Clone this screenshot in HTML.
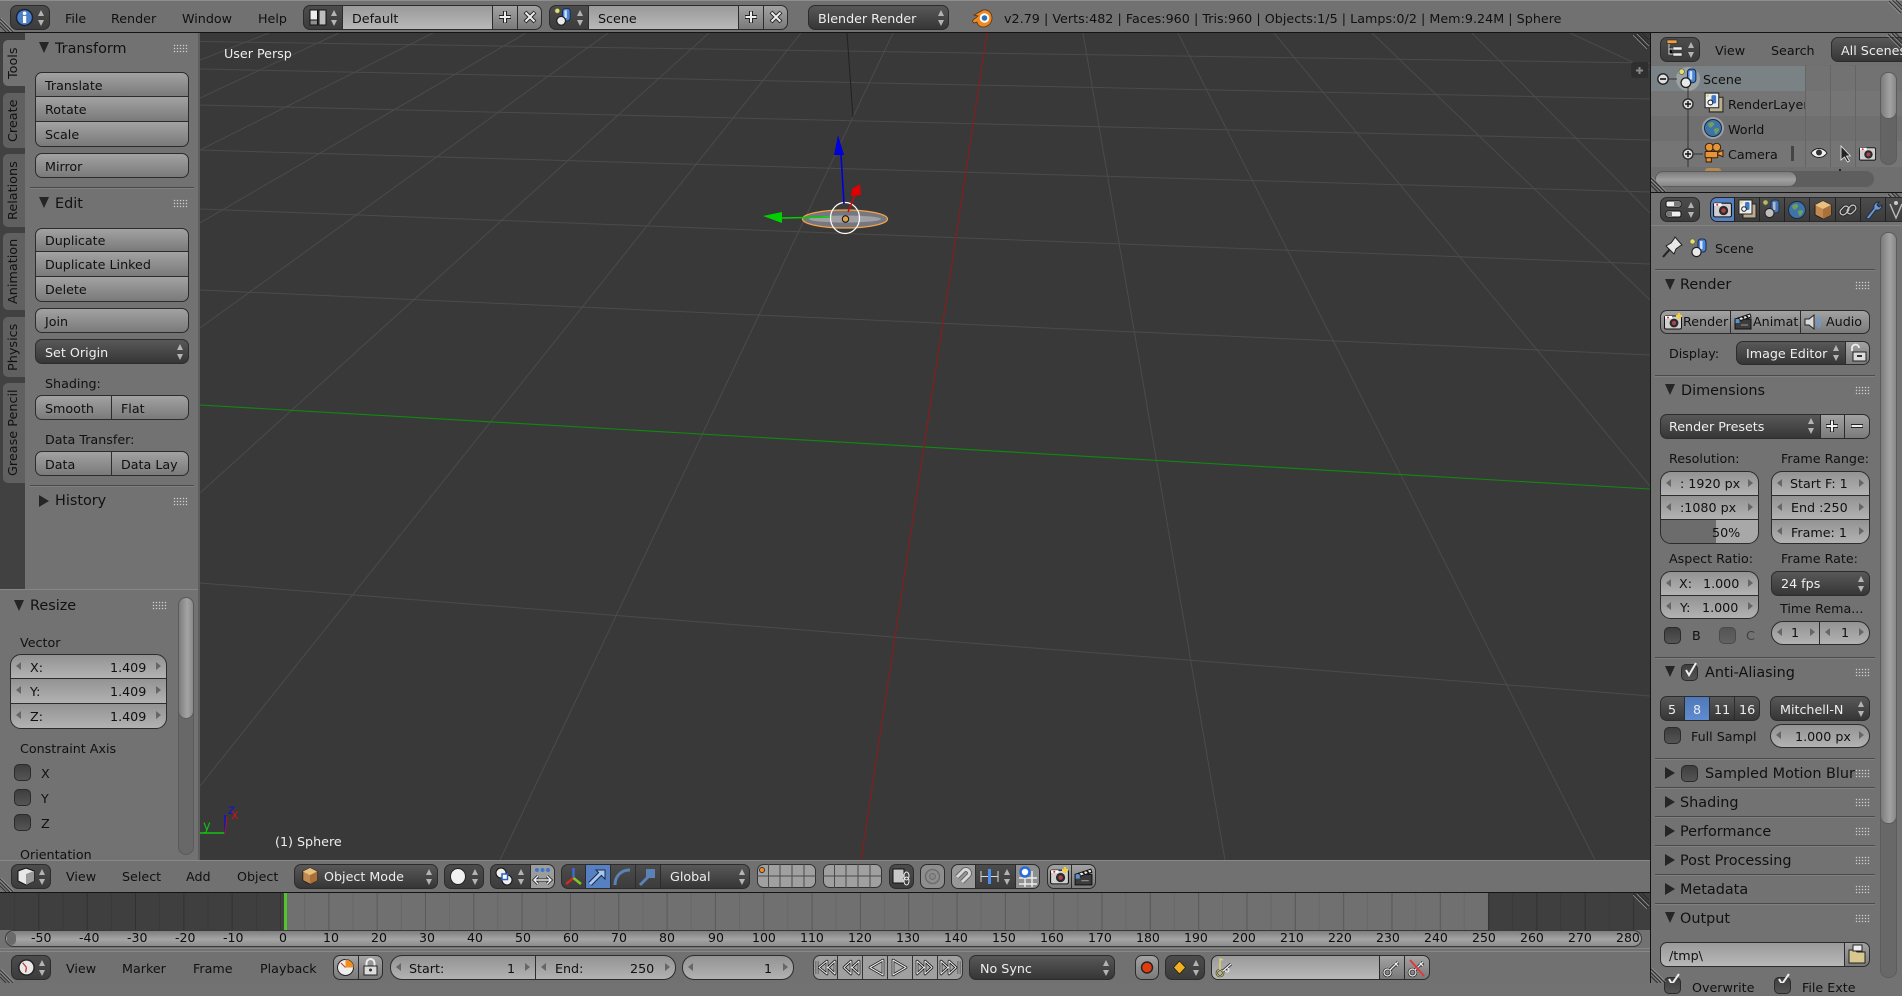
<!DOCTYPE html>
<html lang="en"><head><meta charset="utf-8"><title>Blender 2.79</title>
<style>
html,body{margin:0;padding:0;background:#727272}
body{width:1902px;height:983px;position:relative;overflow:hidden;font-family:"DejaVu Sans","Liberation Sans",sans-serif;font-size:12.7px;color:#111}
div,i,span,svg{position:absolute}
i{display:block}
.t{white-space:nowrap;line-height:16px;color:#101010}
.w{color:#eee}
.h{font-size:14.4px;color:#111;margin-top:1px}
.b,.n,.m,.f,.d{box-sizing:border-box;border:1px solid #2c2c2c}
.b{background:linear-gradient(#a2a2a2,#7a7a7a)}
.n{background:linear-gradient(#939393,#b2b2b2)}
.f{background:linear-gradient(#9a9a9a,#b8b8b8)}
.m{background:linear-gradient(#585858,#363636)}
.d{background:linear-gradient(#4c4c4c,#3c3c3c)}
.r{border-radius:7px}.rT{border-radius:7px 7px 0 0}.rB{border-radius:0 0 7px 7px}.rL{border-radius:7px 0 0 7px}.rR{border-radius:0 7px 7px 0}
.n.rT{border-radius:11px 11px 0 0}.n.rB{border-radius:0 0 11px 11px}
.pill{border-radius:12px}.pL{border-radius:12px 0 0 12px}.pR{border-radius:0 12px 12px 0}
.sep{height:1px;background:#4a4a4a;box-shadow:0 1px 0 #808080}
.ad{width:0;height:0;border-left:5px solid transparent;border-right:5px solid transparent;border-top:11px solid #252525}
.ac{width:0;height:0;border-top:6px solid transparent;border-bottom:6px solid transparent;border-left:10px solid #252525}
.dots{width:15px;height:9px;background:radial-gradient(circle,#cfcfcf .65px,transparent .85px) 0 0/3px 3px}
.al,.arr{top:50%;margin-top:-5px;width:0;height:0;border-top:4px solid transparent;border-bottom:4px solid transparent}
.al{left:5px;border-right:5px solid #666}
.arr{right:5px;border-left:5px solid #666}
.ud{width:8px;height:18px}
.ud:before,.ud:after{content:"";position:absolute;left:0;width:0;height:0;border-left:3.5px solid transparent;border-right:3.5px solid transparent}
.ud:before{top:1px;border-bottom:6px solid #b4b4b4}
.ud:after{bottom:1px;border-top:6px solid #b4b4b4}
.cb{width:17px;height:17px;box-sizing:border-box;border:1px solid #2a2a2a;border-radius:5px;background:linear-gradient(#3e3e3e,#555)}
.tab{left:3px;width:22px;background:#606060;border-radius:5px 0 0 5px;box-sizing:border-box}
.vt{left:6px;width:16px;writing-mode:vertical-rl;transform:rotate(180deg);text-align:center;line-height:16px;color:#111;white-space:nowrap;font-size:12.8px}
.sb{border-radius:8px}
.cell{background:#a0a0a0;border:1px solid #333;box-sizing:border-box}
.lab{font-size:12.5px;line-height:16px;color:#0c0c0c;white-space:nowrap}
</style></head><body>

<svg width="0" height="0" style="left:0;top:0"><defs>
<symbol id="scene" viewBox="0 0 20 20"><circle cx="3.500" cy="3.500" r="2.600" fill="#e4df6a" stroke="#555" stroke-width=".6"/><rect x="9" y="1" width="8" height="13" rx="3" fill="#4d86d6" stroke="#152a50"/><rect x="11" y="3" width="2.500" height="8" fill="#cfe2ff"/><circle cx="7.500" cy="14" r="4.600" fill="#e9e9e9" stroke="#1d1d1d" stroke-width="1.200"/></symbol>
<symbol id="plus" viewBox="0 0 16 16"><path d="M8 2v12M2 8h12" stroke="#222" stroke-width="4"/><path d="M8 2.500v11M2.500 8h11" stroke="#eee" stroke-width="2"/></symbol>
<symbol id="x" viewBox="0 0 16 16"><path d="M3 3l10 10M13 3L3 13" stroke="#222" stroke-width="4"/><path d="M3.500 3.500l9 9M12.500 3.500l-9 9" stroke="#eee" stroke-width="2"/></symbol>
<symbol id="hatch" viewBox="0 0 16 16"><path d="M1 1l14 14M5 0l11 11M9 0l7 7" stroke="#2a2a2a" stroke-width="1"/><path d="M0 2l14 14M4 1l12 12" stroke="#999" stroke-width=".7"/></symbol>
<symbol id="hatch2" viewBox="0 0 16 16"><path d="M0 1l15 15M0 5l11 11M0 9l7 7" stroke="#2a2a2a" stroke-width="1"/><path d="M1 0l15 15M0 3l13 13" stroke="#999" stroke-width=".7"/></symbol>
<symbol id="cam" viewBox="0 0 20 20"><rect x="1.500" y="4" width="17" height="13" rx="1.500" fill="#cfcfcf" stroke="#111"/><rect x="2" y="4" width="7" height="2.500" fill="#fff"/><circle cx="11" cy="11" r="4.400" fill="#2a2a2a"/><circle cx="11" cy="11" r="2.200" fill="#a8434f"/><circle cx="5" cy="5.500" r="1" fill="#e23"/></symbol>
<symbol id="layers" viewBox="0 0 20 20"><path d="M6 5h13v14H6z" fill="#b8ae8e" stroke="#222"/><path d="M2 1h13v14H2z" fill="#ededed" stroke="#222"/><rect x="8" y="3" width="4.500" height="8" rx="1.500" fill="#3f78c8"/><circle cx="7" cy="10" r="2.300" fill="#fff" stroke="#222"/><circle cx="4.500" cy="3.500" r="1.200" fill="#e6d655"/></symbol>
<symbol id="world" viewBox="0 0 20 20"><circle cx="10" cy="10" r="8.500" fill="#3e74a8" stroke="#1c2a40"/><path d="M5 6c3-3 5-2 6-1s-1 3-2 4-3 1-4-3zM11 11c2-1 5-1 5 0s-2 5-3 5-2-3-2-5z" fill="#6fa05a"/></symbol>
<symbol id="filmcam" viewBox="0 0 20 20"><circle cx="6" cy="5" r="3.800" fill="#e59538" stroke="#3a2310"/><circle cx="13" cy="5" r="3.800" fill="#e59538" stroke="#3a2310"/><rect x="2" y="9" width="12" height="6" rx="1" fill="#e59538" stroke="#3a2310"/><path d="M3 15h5v4H3zM14 10l5-2v6l-5-2z" fill="#e59538" stroke="#3a2310"/></symbol>
<symbol id="cube" viewBox="0 0 20 20"><path d="M10 1l8 4v10l-8 4-8-4V5z" fill="#c08a50" stroke="#2a1c10"/><path d="M2 5l8 4 8-4-8-4z" fill="#e9c07f"/><path d="M10 9v10l8-4V5z" fill="#a8713a"/></symbol>
<symbol id="wrench" viewBox="0 0 20 20"><path d="M3 18L11 8c-1-4 2-6 5-6l-2 3 2 2 3-2c0 3-2 6-6 5l-7 9z" fill="#6e9ad2" stroke="#1e2e48"/></symbol>
<symbol id="link" viewBox="0 0 20 20"><g fill="none"><rect x="1.500" y="7.500" width="10" height="6" rx="3" transform="rotate(-45 6.500 10.500)" stroke="#222" stroke-width="3"/><rect x="8.500" y="6.500" width="10" height="6" rx="3" transform="rotate(-45 13.500 9.500)" stroke="#222" stroke-width="3"/><rect x="1.500" y="7.500" width="10" height="6" rx="3" transform="rotate(-45 6.500 10.500)" stroke="#c8c8c8" stroke-width="1.300"/><rect x="8.500" y="6.500" width="10" height="6" rx="3" transform="rotate(-45 13.500 9.500)" stroke="#c8c8c8" stroke-width="1.300"/></g></symbol>
<symbol id="key" viewBox="0 0 20 20"><circle cx="5.500" cy="14.500" r="3.500" fill="none" stroke="#222" stroke-width="2.600"/><circle cx="5.500" cy="14.500" r="3.500" fill="none" stroke="#eee" stroke-width="1.200"/><path d="M8 12l8-8M13 5l3 3" stroke="#222" stroke-width="3"/><path d="M8 12l8-8M13 5l3 3" stroke="#eee" stroke-width="1.400"/></symbol>
<symbol id="clap" viewBox="0 0 20 20"><rect x="2" y="8" width="16" height="10" fill="#3c3c3c" stroke="#111"/><path d="M2 8l15-5 1 3L3 11z" fill="#eee" stroke="#111"/><path d="M5 7l2 2M9 5.500l2 2M13 4.500l2 2" stroke="#111" stroke-width="1.600"/><rect x="2.500" y="8" width="4" height="4" fill="#5c8fd0"/><path d="M8 14h7" stroke="#999"/></symbol>
<symbol id="clock" viewBox="0 0 20 20"><circle cx="10" cy="10" r="8" fill="#e8e8e8" stroke="#222" stroke-width="1.500"/><path d="M10 10L6 5M10 10l-1 5" stroke="#c33" stroke-width="1.400"/></symbol>
</defs></svg>

<!-- TOP BAR -->
<div style="left:0;top:0;width:1902px;height:32px;background:#717171;border-top:1px solid #8e8e8e;box-sizing:border-box"></div>
<div style="left:0;top:32px;width:1902px;height:1px;background:#141414"></div>
<svg style="left:0;top:18px" width="14" height="14"><use href="#hatch2"/></svg>
<svg style="left:1888px;top:0" width="14" height="14"><use href="#hatch"/></svg>

<div class="d r" style="left:10px;top:5px;width:40px;height:25px"></div>
<svg style="left:15px;top:8px" width="19" height="19"><circle cx="9.500" cy="9.500" r="8" fill="#4c80c8" stroke="#16233a" stroke-width="1.500"/><rect x="8" y="8" width="3.200" height="7" fill="#fff"/><circle cx="9.600" cy="5.300" r="1.800" fill="#fff"/></svg>
<i class="ud" style="left:38px;top:9px"></i>
<div class="t" style="left:65px;top:11px">File</div>
<div class="t" style="left:111px;top:11px">Render</div>
<div class="t" style="left:182px;top:11px">Window</div>
<div class="t" style="left:258px;top:11px">Help</div>

<div class="d rL" style="left:303px;top:5px;width:40px;height:25px"></div>
<svg style="left:309px;top:9px" width="18" height="17"><rect x="1" y="1" width="7.500" height="15" fill="#ededed" stroke="#111"/><rect x="10" y="1" width="7" height="15" fill="#bdbdbd" stroke="#111"/><rect x="1" y="11" width="7.500" height="5" fill="#8e8e8e" stroke="#111"/></svg>
<i class="ud" style="left:331px;top:9px"></i>
<div class="f" style="left:342px;top:5px;width:151px;height:25px"></div>
<div class="t" style="left:352px;top:11px">Default</div>
<div class="b" style="left:492px;top:5px;width:26px;height:25px"></div>
<svg style="left:497px;top:9px" width="16" height="16"><use href="#plus"/></svg>
<div class="b rR" style="left:517px;top:5px;width:25px;height:25px"></div>
<svg style="left:522px;top:9px" width="16" height="16"><use href="#x"/></svg>

<div class="d rL" style="left:549px;top:5px;width:40px;height:25px"></div>
<svg style="left:554px;top:7px" width="19" height="20"><use href="#scene"/></svg>
<i class="ud" style="left:577px;top:9px"></i>
<div class="f" style="left:588px;top:5px;width:151px;height:25px"></div>
<div class="t" style="left:598px;top:11px">Scene</div>
<div class="b" style="left:738px;top:5px;width:26px;height:25px"></div>
<svg style="left:743px;top:9px" width="16" height="16"><use href="#plus"/></svg>
<div class="b rR" style="left:763px;top:5px;width:25px;height:25px"></div>
<svg style="left:768px;top:9px" width="16" height="16"><use href="#x"/></svg>

<div class="m r" style="left:808px;top:5px;width:141px;height:25px"></div>
<div class="t w" style="left:818px;top:11px">Blender Render</div>
<i class="ud" style="left:938px;top:9px"></i>
<svg style="left:972px;top:8px" width="21" height="20" viewBox="0 0 21 20"><path d="M0 13l6-5-4-1 9-5c5-1 9 3 9 8s-4 9-9 9c-4 0-6-3-6-5l-3 1z" fill="#ee8a24" stroke="#5a2f08" stroke-width=".8"/><circle cx="12.500" cy="10" r="4.800" fill="#fff"/><circle cx="12.500" cy="10" r="2.800" fill="#2a6fb8"/></svg>
<div class="t" style="left:1004px;top:11px;letter-spacing:.03px">v2.79 | Verts:482 | Faces:960 | Tris:960 | Objects:1/5 | Lamps:0/2 | Mem:9.24M | Sphere</div>

<!-- VIEWPORT -->
<div style="left:200px;top:33px;width:1450px;height:827px;background:#393939"></div>
<svg style="left:200px;top:33px" width="1450" height="827" viewBox="200 33 1450 827">
<g stroke="#4b4b4b" stroke-width="1" fill="none">
<path d="M200 41.500L1650 63M200 69L1650 99M200 105L1650 140M200 150L1650 192M200 209L1650 264M200 290L1650 355M200 583L1650 696"/>
<path d="M893 33L500 860M801 33L200 786M709 33L200 493M608 33L200 328M526 33L200 223M433 33L200 150M339 33L200 98M269 33L200 60M1083 33L1225 860M1178 33L1595 860M1274 33L1650 486M1372 33L1650 300M1472 33L1650 213M1570 33L1650 70"/>
</g>
<path d="M200 405L1650 489" stroke="#0f8a0f" stroke-width="1.100"/>
<path d="M987 33L861 860" stroke="#8a1c1c" stroke-width="1.100"/>
<path d="M847 33L853 117" stroke="#222" stroke-width="1"/>
<ellipse cx="845" cy="219" rx="42.500" ry="9" fill="#77777f" stroke="#f2a447" stroke-width="1.300"/>
<ellipse cx="845" cy="219" rx="36" ry="3.500" fill="#a0a0a4"/>
<ellipse cx="845" cy="218" rx="14.500" ry="15.500" fill="none" stroke="#fff" stroke-width="1.200"/>
<path d="M841 155L844 204" stroke="#0000dc" stroke-width="1.600"/>
<path d="M838 135L844 155H834z" fill="#0000dc"/>
<path d="M855 195L848 212" stroke="#e00000" stroke-width="1.400"/>
<path d="M860 184L861 195L851 196L852 189z" fill="#e00000"/>
<path d="M782 218L830 217" stroke="#00d000" stroke-width="1.400"/>
<path d="M763 216L782 212V223z" fill="#00d000"/>
<circle cx="845.500" cy="219" r="3.200" fill="#e0a050" stroke="#111" stroke-width="1"/>
<path d="M200 833H225" stroke="#0fc40f" stroke-width="1.600"/>
<path d="M225 815V834" stroke="#1010d0" stroke-width="1.400"/>
<path d="M225 834L227 817" stroke="#b01818" stroke-width="1"/>
<text x="203" y="830" fill="#0fc40f" font-size="13" font-family="DejaVu Sans">y</text>
<text x="228" y="814" fill="#1515c8" font-size="13" font-family="DejaVu Sans">z</text>
<text x="231" y="819" fill="#c01818" font-size="13" font-family="DejaVu Sans">x</text>
</svg>
<div class="t" style="left:224px;top:46px;color:#eee">User Persp</div>
<div class="t" style="left:275px;top:834px;color:#eee">(1) Sphere</div>
<svg style="left:1633px;top:33px" width="16" height="16"><use href="#hatch"/></svg>
<div style="left:1631px;top:62px;width:17px;height:16px;background:#2f2f2f;border-radius:3px 0 0 3px"></div>
<svg style="left:1635px;top:66px" width="9" height="9"><path d="M4.500 1v7M1 4.500h7" stroke="#8a8a8a" stroke-width="2"/></svg>

<!-- LEFT TOOLS -->
<div style="left:0;top:33px;width:25px;height:557px;background:#414141"></div>
<div style="left:25px;top:33px;width:175px;height:557px;background:#727272"></div>
<div style="left:198px;top:33px;width:2px;height:827px;background:#5f5f5f"></div>
<div class="tab" style="top:40px;height:46px;background:#727272"></div><div class="vt" style="top:40px;height:46px">Tools</div>
<div class="tab" style="top:93px;height:55px"></div><div class="vt" style="top:93px;height:55px">Create</div>
<div class="tab" style="top:154px;height:73px"></div><div class="vt" style="top:154px;height:73px">Relations</div>
<div class="tab" style="top:233px;height:77px"></div><div class="vt" style="top:233px;height:77px">Animation</div>
<div class="tab" style="top:317px;height:60px"></div><div class="vt" style="top:317px;height:60px">Physics</div>
<div class="tab" style="top:383px;height:100px"></div><div class="vt" style="top:383px;height:100px">Grease Pencil</div>

<i class="ad" style="left:39px;top:42px"></i>
<div class="t h" style="left:55px;top:40px">Transform</div>
<i class="dots" style="left:173px;top:44px"></i>
<div class="b rT" style="left:35px;top:72px;width:154px;height:25px"></div>
<div class="b" style="left:35px;top:96px;width:154px;height:26px"></div>
<div class="b rB" style="left:35px;top:121px;width:154px;height:26px"></div>
<div class="t" style="left:45px;top:78px">Translate</div>
<div class="t" style="left:45px;top:102px">Rotate</div>
<div class="t" style="left:45px;top:127px">Scale</div>
<div class="b r" style="left:35px;top:153px;width:154px;height:25px"></div>
<div class="t" style="left:45px;top:159px">Mirror</div>
<div class="sep" style="left:30px;top:187px;width:164px"></div>
<i class="ad" style="left:39px;top:197px"></i>
<div class="t h" style="left:55px;top:195px">Edit</div>
<i class="dots" style="left:173px;top:199px"></i>
<div class="b rT" style="left:35px;top:228px;width:154px;height:24px"></div>
<div class="b" style="left:35px;top:251px;width:154px;height:26px"></div>
<div class="b rB" style="left:35px;top:276px;width:154px;height:26px"></div>
<div class="t" style="left:45px;top:233px">Duplicate</div>
<div class="t" style="left:45px;top:257px">Duplicate Linked</div>
<div class="t" style="left:45px;top:282px">Delete</div>
<div class="b r" style="left:35px;top:308px;width:154px;height:25px"></div>
<div class="t" style="left:45px;top:314px">Join</div>
<div class="m r" style="left:35px;top:339px;width:154px;height:25px"></div>
<div class="t w" style="left:45px;top:345px">Set Origin</div>
<i class="ud" style="left:177px;top:343px"></i>
<div class="t" style="left:45px;top:376px">Shading:</div>
<div class="b rL" style="left:35px;top:395px;width:77px;height:25px"></div>
<div class="b rR" style="left:111px;top:395px;width:78px;height:25px"></div>
<div class="t" style="left:45px;top:401px">Smooth</div>
<div class="t" style="left:121px;top:401px">Flat</div>
<div class="t" style="left:45px;top:432px">Data Transfer:</div>
<div class="b rL" style="left:35px;top:451px;width:77px;height:25px"></div>
<div class="b rR" style="left:111px;top:451px;width:78px;height:25px"></div>
<div class="t" style="left:45px;top:457px">Data</div>
<div class="t" style="left:121px;top:457px">Data Lay</div>
<div class="sep" style="left:30px;top:485px;width:164px"></div>
<i class="ac" style="left:39px;top:495px"></i>
<div class="t h" style="left:55px;top:492px">History</div>
<i class="dots" style="left:173px;top:497px"></i>

<!-- RESIZE OP PANEL -->
<div style="left:0;top:589px;width:198px;height:271px;background:#727272;border-top:1px solid #868686;box-sizing:border-box"></div>
<i class="ad" style="left:14px;top:600px"></i>
<div class="t h" style="left:30px;top:597px">Resize</div>
<i class="dots" style="left:152px;top:601px"></i>
<div class="sb" style="left:178px;top:597px;width:16px;height:258px;background:#686868;border:1px solid #5a5a5a;box-sizing:border-box"></div>
<div class="sb" style="left:178px;top:597px;width:16px;height:122px;background:linear-gradient(90deg,#7c7c7c,#a4a4a4 60%,#8a8a8a);border:1px solid #5a5a5a;box-sizing:border-box"></div>
<div class="t" style="left:20px;top:635px">Vector</div>
<div class="n rT" style="left:10px;top:654px;width:157px;height:25px"><i class="al"></i><i class="arr"></i></div>
<div class="n" style="left:10px;top:678px;width:157px;height:26px"><i class="al"></i><i class="arr"></i></div>
<div class="n rB" style="left:10px;top:703px;width:157px;height:26px"><i class="al"></i><i class="arr"></i></div>
<div class="t" style="left:30px;top:660px">X:</div><div class="t" style="left:110px;top:660px">1.409</div>
<div class="t" style="left:30px;top:684px">Y:</div><div class="t" style="left:110px;top:684px">1.409</div>
<div class="t" style="left:30px;top:709px">Z:</div><div class="t" style="left:110px;top:709px">1.409</div>
<div class="t" style="left:20px;top:741px">Constraint Axis</div>
<i class="cb" style="left:14px;top:764px"></i><div class="t" style="left:41px;top:766px">X</div>
<i class="cb" style="left:14px;top:789px"></i><div class="t" style="left:41px;top:791px">Y</div>
<i class="cb" style="left:14px;top:814px"></i><div class="t" style="left:41px;top:816px">Z</div>
<div class="t" style="left:20px;top:847px">Orientation</div>

<!-- 3D VIEW HEADER -->
<div style="left:0;top:860px;width:1650px;height:32px;background:#717171;border-top:1px solid #888;box-sizing:border-box"></div>
<div style="left:0;top:892px;width:1650px;height:1px;background:#141414"></div>
<svg style="left:0;top:878px" width="14" height="14"><use href="#hatch2"/></svg>
<div class="d r" style="left:11px;top:864px;width:40px;height:25px"></div>
<svg style="left:17px;top:867px" width="18" height="19"><path d="M9 1l8 3v10l-8 4-8-4V4z" fill="#e8e8e8" stroke="#111"/><path d="M9 7v11l8-4V4z" fill="#9a9a9a"/></svg>
<i class="ud" style="left:39px;top:868px"></i>
<div class="t" style="left:66px;top:869px">View</div>
<div class="t" style="left:122px;top:869px">Select</div>
<div class="t" style="left:186px;top:869px">Add</div>
<div class="t" style="left:237px;top:869px">Object</div>
<div class="m r" style="left:294px;top:864px;width:144px;height:25px"></div>
<svg style="left:301px;top:867px" width="18" height="18"><use href="#cube"/></svg>
<div class="t w" style="left:324px;top:869px">Object Mode</div>
<i class="ud" style="left:426px;top:868px"></i>
<div class="d r" style="left:444px;top:864px;width:40px;height:25px"></div>
<svg style="left:450px;top:868px" width="16" height="17"><ellipse cx="8" cy="8.500" rx="7.500" ry="8" fill="#f0f0f0" stroke="#222"/></svg>
<i class="ud" style="left:472px;top:868px"></i>
<div class="d rL" style="left:490px;top:864px;width:41px;height:25px"></div>
<svg style="left:495px;top:867px" width="19" height="19"><circle cx="6" cy="6" r="5" fill="#eee" stroke="#111"/><circle cx="12" cy="13" r="5" fill="#eee" stroke="#111"/><rect x="7" y="7" width="5.500" height="5.500" fill="#fff" stroke="#2a60c0" stroke-width="1.500"/></svg>
<i class="ud" style="left:518px;top:868px"></i>
<div class="b rR" style="left:530px;top:864px;width:25px;height:25px;background:#9c9c9c"></div>
<svg style="left:532px;top:866px" width="21" height="21"><g fill="#3f78c8"><circle cx="5" cy="4" r="2"/><circle cx="10.500" cy="4" r="2"/><circle cx="16" cy="4" r="2"/></g><path d="M2 14h17M6 10l-4 4 4 4M15 10l4 4-4 4" fill="none" stroke="#222" stroke-width="3"/><path d="M2 14h17M6 10l-4 4 4 4M15 10l4 4-4 4" fill="none" stroke="#eee" stroke-width="1.400"/></svg>
<div class="d rL" style="left:561px;top:864px;width:25px;height:25px"></div>
<svg style="left:563px;top:866px" width="21" height="21"><path d="M10.500 12V2" stroke="#3a6cd0" stroke-width="2.500"/><path d="M10.500 12L3 18" stroke="#d02a20" stroke-width="2.500"/><path d="M10.500 12L18 18" stroke="#80c820" stroke-width="2.500"/></svg>
<div style="left:585px;top:864px;width:26px;height:25px;background:#5680c2;border:1px solid #2a2a2a;box-sizing:border-box"></div>
<svg style="left:587px;top:866px" width="21" height="21"><path d="M3 18L14 7" fill="none" stroke="#1a2a48" stroke-width="5"/><path d="M9 4h9v9z" fill="#a8c8f0" stroke="#1a2a48"/><path d="M3 18L14 7" fill="none" stroke="#a8c8f0" stroke-width="3"/></svg>
<div class="d" style="left:610px;top:864px;width:26px;height:25px"></div>
<svg style="left:612px;top:866px" width="21" height="21"><path d="M3 19C3 10 9 4 18 4" fill="none" stroke="#5b82b4" stroke-width="3"/></svg>
<div class="d" style="left:635px;top:864px;width:26px;height:25px"></div>
<svg style="left:637px;top:866px" width="21" height="21"><path d="M3 19l9-9" stroke="#5b82b4" stroke-width="3"/><rect x="9" y="3" width="9" height="9" fill="#5b82b4"/></svg>
<div class="m rR" style="left:660px;top:864px;width:90px;height:25px"></div>
<div class="t w" style="left:670px;top:869px">Global</div>
<i class="ud" style="left:739px;top:868px"></i>

<svg style="left:757px;top:864px" width="60" height="24"><rect x=".5" y=".5" width="58" height="23" rx="6" fill="#a0a0a0" stroke="#333"/><path d="M11.500 0v24M23 0v24M35 0v24M47 0v24M0 12h59" stroke="#4a4a4a"/><circle cx="5" cy="6" r="2.500" fill="#ee9020" stroke="#333"/></svg>
<svg style="left:823px;top:864px" width="60" height="24"><rect x=".5" y=".5" width="58" height="23" rx="6" fill="#a0a0a0" stroke="#333"/><path d="M11.500 0v24M23 0v24M35 0v24M47 0v24M0 12h59" stroke="#4a4a4a"/></svg>
<div class="d r" style="left:889px;top:864px;width:25px;height:25px"></div>
<svg style="left:892px;top:867px" width="20" height="19"><rect x="1" y="2" width="11" height="14" fill="#c8c8c8" stroke="#111"/><ellipse cx="14.500" cy="9" rx="2.500" ry="4" fill="none" stroke="#eee"/><ellipse cx="14.500" cy="14" rx="2.500" ry="4" fill="none" stroke="#eee"/></svg>
<div class="b r" style="left:920px;top:864px;width:25px;height:25px;background:#8e8e8e"></div>
<svg style="left:923px;top:867px" width="19" height="19"><circle cx="9.500" cy="9.500" r="7" fill="none" stroke="#6e6e6e" stroke-width="1.500"/><circle cx="9.500" cy="9.500" r="3" fill="#888" stroke="#6e6e6e"/></svg>
<div class="b rL" style="left:951px;top:864px;width:25px;height:25px;background:#989898"></div>
<svg style="left:953px;top:866px" width="21" height="21"><path d="M4 11l7-7c3-2 7 2 5 5l-7 7" fill="none" stroke="#666" stroke-width="5"/><path d="M4 11l7-7c3-2 7 2 5 5l-7 7" fill="none" stroke="#d8d8d8" stroke-width="3"/></svg>
<div class="d" style="left:975px;top:864px;width:41px;height:25px"></div>
<svg style="left:980px;top:867px" width="20" height="19"><path d="M1 4v11M18 4v11M1 9.500h17" stroke="#d8d8d8"/><path d="M9.500 2v15" stroke="#4a90f0" stroke-width="3"/></svg>
<i class="ud" style="left:1004px;top:868px"></i>
<div class="b rR" style="left:1015px;top:864px;width:25px;height:25px;background:#8f8f8f"></div>
<svg style="left:1017px;top:865px" width="21" height="22"><path d="M8 4v18M15 6v16M2 13h18M2 19h18" stroke="#eee" stroke-width="1.400"/><circle cx="8" cy="7" r="4.500" fill="#fff" stroke="#2a6ad8" stroke-width="2.500"/></svg>
<div class="b rL" style="left:1047px;top:864px;width:25px;height:25px"></div>
<svg style="left:1049px;top:866px" width="21" height="21"><use href="#cam"/><path d="M16 1v6M13 4h6" stroke="#f0d040" stroke-width="2.200"/></svg>
<div class="b rR" style="left:1071px;top:864px;width:25px;height:25px"></div>
<svg style="left:1073px;top:866px" width="21" height="21"><use href="#clap"/></svg>

<!-- TIMELINE -->
<div style="left:0;top:893px;width:1650px;height:37px;background-color:#707070;background-image:linear-gradient(90deg,#5a5a5a 1px,transparent 1px),linear-gradient(90deg,#676767 1px,transparent 1px);background-size:48.34px 100%,24.17px 100%;background-position:280px 0,280px 0"></div>
<div style="left:0;top:893px;width:284px;height:37px;background:rgba(0,0,0,.44)"></div>
<div style="left:1488px;top:893px;width:162px;height:37px;background:rgba(0,0,0,.44)"></div>
<div style="left:284px;top:893px;width:3px;height:37px;background:#52c42c"></div>
<svg style="left:1633px;top:893px" width="16" height="16"><use href="#hatch"/></svg>
<div style="left:0;top:930px;width:1650px;height:21px;background:#727272"></div>
<div style="left:5px;top:930px;width:1637px;height:17px;border:1px solid #3a3a3a;border-radius:9px;box-sizing:border-box;background:linear-gradient(#7e7e7e,#a4a4a4 55%,#8c8c8c)"></div>
<div style="left:7px;top:932px;width:9px;height:13px;border-radius:6px;background:#6a6a6a"></div>
<div style="left:0;top:948px;width:1650px;height:1px;background:#868686"></div>
<div class="lab" style="left:31px;top:930px">-50</div><div class="lab" style="left:79px;top:930px">-40</div><div class="lab" style="left:127px;top:930px">-30</div><div class="lab" style="left:175px;top:930px">-20</div><div class="lab" style="left:223px;top:930px">-10</div><div class="lab" style="left:279px;top:930px">0</div>
<div class="lab" style="left:323px;top:930px">10</div><div class="lab" style="left:371px;top:930px">20</div><div class="lab" style="left:419px;top:930px">30</div><div class="lab" style="left:467px;top:930px">40</div><div class="lab" style="left:515px;top:930px">50</div><div class="lab" style="left:563px;top:930px">60</div><div class="lab" style="left:611px;top:930px">70</div><div class="lab" style="left:659px;top:930px">80</div><div class="lab" style="left:708px;top:930px">90</div>
<div class="lab" style="left:752px;top:930px">100</div><div class="lab" style="left:800px;top:930px">110</div><div class="lab" style="left:848px;top:930px">120</div><div class="lab" style="left:896px;top:930px">130</div><div class="lab" style="left:944px;top:930px">140</div><div class="lab" style="left:992px;top:930px">150</div><div class="lab" style="left:1040px;top:930px">160</div><div class="lab" style="left:1088px;top:930px">170</div><div class="lab" style="left:1136px;top:930px">180</div><div class="lab" style="left:1184px;top:930px">190</div><div class="lab" style="left:1232px;top:930px">200</div><div class="lab" style="left:1280px;top:930px">210</div><div class="lab" style="left:1328px;top:930px">220</div><div class="lab" style="left:1376px;top:930px">230</div><div class="lab" style="left:1424px;top:930px">240</div><div class="lab" style="left:1472px;top:930px">250</div><div class="lab" style="left:1520px;top:930px">260</div><div class="lab" style="left:1568px;top:930px">270</div><div class="lab" style="left:1616px;top:930px">280</div>

<!-- TIMELINE HEADER -->
<div style="left:0;top:951px;width:1650px;height:32px;background:#717171;border-top:1px solid #888;box-sizing:border-box"></div>
<svg style="left:0;top:969px" width="14" height="14"><use href="#hatch2"/></svg>
<div class="d r" style="left:11px;top:955px;width:40px;height:25px"></div>
<svg style="left:17px;top:958px" width="19" height="19"><use href="#clock"/></svg>
<i class="ud" style="left:39px;top:959px"></i>
<div class="t" style="left:66px;top:961px">View</div>
<div class="t" style="left:122px;top:961px">Marker</div>
<div class="t" style="left:193px;top:961px">Frame</div>
<div class="t" style="left:260px;top:961px">Playback</div>
<div class="b rL" style="left:333px;top:955px;width:26px;height:25px"></div>
<svg style="left:336px;top:958px" width="19" height="19"><circle cx="9.500" cy="9.500" r="8" fill="#eee" stroke="#222"/><path d="M9.500 9.500V1.500A8 8 0 0 1 17.500 9.500z" fill="#ee9020"/><path d="M9.500 9.500L5 5" stroke="#c33"/></svg>
<div class="b rR" style="left:358px;top:955px;width:25px;height:25px"></div>
<svg style="left:362px;top:957px" width="17" height="20"><path d="M4.500 9V6a4 4 0 0 1 8 0v3" fill="none" stroke="#eee" stroke-width="2"/><rect x="2" y="9" width="13" height="9" fill="#ddd" stroke="#222"/><circle cx="8.500" cy="13" r="1.500" fill="#333"/></svg>
<div class="n pL" style="left:390px;top:955px;width:146px;height:25px"><i class="al"></i><i class="arr"></i></div>
<div class="n pR" style="left:535px;top:955px;width:141px;height:25px"><i class="al"></i><i class="arr"></i></div>
<div class="t" style="left:409px;top:961px">Start:</div><div class="t" style="left:507px;top:961px">1</div>
<div class="t" style="left:555px;top:961px">End:</div><div class="t" style="left:630px;top:961px">250</div>
<div class="n pill" style="left:682px;top:955px;width:112px;height:25px"><i class="al"></i><i class="arr"></i></div>
<div class="t" style="left:764px;top:961px">1</div>
<div class="cell rL" style="left:813px;top:955px;width:25px;height:25px;border-radius:7px 0 0 7px"></div>
<div class="cell" style="left:837px;top:955px;width:26px;height:25px"></div>
<div class="cell" style="left:862px;top:955px;width:26px;height:25px"></div>
<div class="cell" style="left:887px;top:955px;width:26px;height:25px"></div>
<div class="cell" style="left:912px;top:955px;width:26px;height:25px"></div>
<div class="cell" style="left:937px;top:955px;width:26px;height:25px;border-radius:0 7px 7px 0"></div>
<svg style="left:813px;top:955px" width="150" height="25"><g fill="#aaa" stroke="#111" stroke-width="2.600" stroke-linejoin="round">
<path d="M4 6v13M14 6L6 12.500l8 6.500zM22 6l-7 6.500 7 6.500z"/>
<path d="M38 6l-7 6.500 7 6.500zM46 6l-7 6.500 7 6.500z"/>
<path d="M70 5L57 12.500 70 20z"/>
<path d="M80 5l13 7.500L80 20z"/>
<path d="M104 6l7 6.500-7 6.500zM112 6l7 6.500-7 6.500z"/>
<path d="M128 6l7 6.500-7 6.500zM136 6l7 6.500-7 6.500zM146 6v13"/>
</g><g fill="none" stroke="#f0f0f0" stroke-width="1.100" stroke-linejoin="round">
<path d="M4 6v13M14 6L6 12.500l8 6.500zM22 6l-7 6.500 7 6.500z"/>
<path d="M38 6l-7 6.500 7 6.500zM46 6l-7 6.500 7 6.500z"/>
<path d="M70 5L57 12.500 70 20z"/>
<path d="M80 5l13 7.500L80 20z"/>
<path d="M104 6l7 6.500-7 6.500zM112 6l7 6.500-7 6.500z"/>
<path d="M128 6l7 6.500-7 6.500zM136 6l7 6.500-7 6.500zM146 6v13"/>
</g></svg>
<div class="d r" style="left:969px;top:955px;width:146px;height:25px;background:linear-gradient(#585858,#363636)"></div>
<div class="t w" style="left:980px;top:961px">No Sync</div>
<i class="ud" style="left:1103px;top:959px"></i>
<div class="b r" style="left:1135px;top:955px;width:24px;height:25px"></div>
<svg style="left:1140px;top:960px" width="14" height="15"><circle cx="7" cy="7.500" r="5.500" fill="#e03c10" stroke="#222" stroke-width="1.400"/></svg>
<div class="d r" style="left:1165px;top:955px;width:40px;height:25px"></div>
<svg style="left:1172px;top:960px" width="15" height="15"><path d="M7.500 1l6 6.500-6 6.500-6-6.500z" fill="#f0b020" stroke="#111" stroke-width=".6"/></svg>
<i class="ud" style="left:1193px;top:959px"></i>
<div class="f rL" style="left:1211px;top:955px;width:169px;height:25px"></div>
<svg style="left:1215px;top:957px" width="20" height="21"><circle cx="5" cy="16" r="3.200" fill="none" stroke="#222" stroke-width="2.200"/><circle cx="5" cy="16" r="3.200" fill="none" stroke="#d8cf70"/><path d="M5 13V2l3 1" stroke="#d8cf70" stroke-width="1.600" fill="none"/><path d="M8 14l8-7" stroke="#222" stroke-width="3"/><path d="M8 14l8-7" stroke="#eee" stroke-width="1.400"/><circle cx="12" cy="13" r="2" fill="none" stroke="#eee"/></svg>
<div class="b" style="left:1379px;top:955px;width:26px;height:25px"></div>
<svg style="left:1382px;top:958px" width="20" height="20"><use href="#key"/></svg>
<div class="b rR" style="left:1404px;top:955px;width:26px;height:25px"></div>
<svg style="left:1407px;top:958px" width="20" height="20"><use href="#key"/><path d="M3 2l14 16" stroke="#e23838" stroke-width="2"/></svg>

<!-- DIVIDER -->
<div style="left:1650px;top:33px;width:1px;height:950px;background:#141414"></div>

<!-- OUTLINER -->
<div style="left:1651px;top:33px;width:251px;height:32px;background:#717171"></div>
<div style="left:1651px;top:65px;width:251px;height:127px;background:#6f6f6f"></div>
<div style="left:1651px;top:66px;width:154px;height:25px;background:#7a8286"></div>
<div style="left:1805px;top:66px;width:97px;height:25px;background:#727272"></div>
<div style="left:1651px;top:91px;width:251px;height:25px;background:#757575"></div>
<div style="left:1651px;top:141px;width:251px;height:26px;background:#757575"></div>
<div style="left:1805px;top:65px;width:1px;height:104px;background:#656565"></div>
<div style="left:1830px;top:65px;width:1px;height:104px;background:#656565"></div>
<div style="left:1855px;top:65px;width:1px;height:104px;background:#656565"></div>
<div class="d r" style="left:1660px;top:37px;width:40px;height:25px"></div>
<svg style="left:1666px;top:39px" width="18" height="20"><rect x="1" y="1" width="10" height="3.500" fill="#f0a040" stroke="#222" stroke-width=".6"/><path d="M3 5v10h4M3 10h4" stroke="#ddd"/><rect x="7" y="8" width="9" height="3" fill="#eee" stroke="#222" stroke-width=".5"/><rect x="7" y="14" width="9" height="3" fill="#eee" stroke="#222" stroke-width=".5"/></svg>
<i class="ud" style="left:1688px;top:41px"></i>
<div class="t" style="left:1715px;top:43px">View</div>
<div class="t" style="left:1771px;top:43px">Search</div>
<div class="m" style="left:1831px;top:37px;width:80px;height:25px;border-radius:7px 0 0 7px"></div>
<div class="t w" style="left:1841px;top:43px">All Scenes</div>
<svg style="left:1887px;top:33px" width="15" height="15"><use href="#hatch"/></svg>

<svg style="left:1651px;top:65px" width="70" height="110"><circle cx="37" cy="14" r="12" fill="#b8bcbe" opacity=".55"/><path d="M37 20v90M12 14h14M43 89h9" stroke="#333"/><circle cx="12" cy="14" r="5.200" fill="#ddd" stroke="#222" stroke-width="1.400"/><path d="M9 14h6" stroke="#111" stroke-width="1.600"/><circle cx="37" cy="39" r="5" fill="#ddd" stroke="#222" stroke-width="1.300"/><path d="M34 39h6M37 36v6" stroke="#111" stroke-width="1.400"/><circle cx="37" cy="89" r="5" fill="#ddd" stroke="#222" stroke-width="1.300"/><path d="M34 89h6M37 86v6" stroke="#111" stroke-width="1.400"/></svg>
<svg style="left:1678px;top:68px" width="21" height="21"><use href="#scene"/></svg>
<div class="t" style="left:1703px;top:72px">Scene</div>
<svg style="left:1703px;top:92px" width="21" height="21"><use href="#layers"/></svg>
<div class="t" style="left:1728px;top:97px;width:77px;overflow:hidden">RenderLayers</div>
<svg style="left:1702px;top:117px" width="22" height="22"><circle cx="11" cy="11" r="11" fill="#aeb4c0" opacity=".7"/></svg>
<svg style="left:1703px;top:118px" width="20" height="20"><use href="#world"/></svg>
<div class="t" style="left:1728px;top:122px">World</div>
<svg style="left:1703px;top:142px" width="21" height="21"><use href="#filmcam"/></svg>
<div class="t" style="left:1728px;top:147px">Camera</div>
<div style="left:1791px;top:146px;width:3px;height:15px;background:#444"></div>
<svg style="left:1810px;top:146px" width="18" height="14"><path d="M1 7c4-6 12-6 16 0-4 6-12 6-16 0z" fill="#f0f0f0" stroke="#222"/><circle cx="9" cy="6.500" r="3" fill="#333"/></svg>
<svg style="left:1839px;top:145px" width="12" height="18"><path d="M2 1v14l3.500-3 3 5 2-1-3-5h4z" fill="#222" stroke="#eee" stroke-width=".8"/></svg>
<svg style="left:1858px;top:144px" width="19" height="19"><use href="#cam"/></svg>
<div style="left:1651px;top:167px;width:251px;height:5px;background:#6f6f6f"></div>
<div style="left:1705px;top:168px;width:16px;height:3px;background:#b8894f;border-radius:3px 3px 0 0"></div>
<div style="left:1839px;top:169px;width:2px;height:2px;background:#222"></div>
<div class="sb" style="left:1880px;top:72px;width:17px;height:93px;background:#646464;border:1px solid #5c5c5c;box-sizing:border-box"></div>
<div class="sb" style="left:1880px;top:72px;width:17px;height:47px;background:linear-gradient(90deg,#7c7c7c,#a2a2a2 60%,#888);border:1px solid #5c5c5c;box-sizing:border-box"></div>
<div class="sb" style="left:1655px;top:171px;width:219px;height:16px;background:#5e5e5e"></div>
<div class="sb" style="left:1655px;top:171px;width:142px;height:16px;background:linear-gradient(#7c7c7c,#a0a0a0 55%,#868686);border:1px solid #5c5c5c;box-sizing:border-box"></div>
<svg style="left:1651px;top:177px" width="15" height="15"><use href="#hatch2"/></svg>
<div style="left:1651px;top:192px;width:251px;height:1px;background:#141414"></div>

<!-- PROPERTIES -->
<div style="left:1651px;top:193px;width:251px;height:790px;background:#727272"></div>
<div style="left:1651px;top:225px;width:251px;height:1px;background:#848484"></div>
<svg style="left:1887px;top:193px" width="15" height="15"><use href="#hatch"/></svg>
<div class="d r" style="left:1660px;top:197px;width:40px;height:25px"></div>
<svg style="left:1665px;top:200px" width="20" height="19"><rect x="1" y="1" width="15" height="6" rx="2" fill="#eee" stroke="#111"/><rect x="9" y="2" width="6" height="4" fill="#777"/><rect x="1" y="11" width="15" height="6" rx="2" fill="#eee" stroke="#111"/><rect x="2" y="12" width="5" height="4" fill="#777"/></svg>
<i class="ud" style="left:1688px;top:201px"></i>
<div class="d" style="left:1734px;top:197px;width:200px;height:25px"></div>
<div style="left:1710px;top:197px;width:25px;height:25px;background:#5680c2;border:1px solid #222;box-sizing:border-box;border-radius:7px 0 0 7px"></div>
<div style="left:1759px;top:197px;width:1px;height:25px;background:#222"></div>
<div style="left:1784px;top:197px;width:1px;height:25px;background:#222"></div>
<div style="left:1809px;top:197px;width:1px;height:25px;background:#222"></div>
<div style="left:1835px;top:197px;width:1px;height:25px;background:#222"></div>
<div style="left:1860px;top:197px;width:1px;height:25px;background:#222"></div>
<div style="left:1885px;top:197px;width:1px;height:25px;background:#222"></div>
<svg style="left:1712px;top:199px" width="21" height="21"><use href="#cam"/></svg>
<svg style="left:1737px;top:199px" width="20" height="20"><use href="#layers"/></svg>
<svg style="left:1762px;top:199px" width="20" height="20"><use href="#scene" opacity=".75"/></svg>
<svg style="left:1787px;top:200px" width="20" height="20"><use href="#world"/></svg>
<svg style="left:1813px;top:200px" width="20" height="20"><use href="#cube"/></svg>
<svg style="left:1838px;top:200px" width="20" height="20"><use href="#link"/></svg>
<svg style="left:1863px;top:200px" width="20" height="20"><use href="#wrench"/></svg>
<svg style="left:1888px;top:200px" width="14" height="20"><path d="M2 4l6 14 6-14" fill="none" stroke="#bbb" stroke-width="1.400"/><circle cx="8" cy="3" r="2" fill="#ccc"/></svg>

<div class="sb" style="left:1880px;top:232px;width:17px;height:746px;background:#686868;border:1px solid #5c5c5c;box-sizing:border-box"></div>
<div class="sb" style="left:1880px;top:232px;width:17px;height:592px;background:linear-gradient(90deg,#7c7c7c,#a2a2a2 60%,#888);border:1px solid #5c5c5c;box-sizing:border-box"></div>

<svg style="left:1662px;top:236px" width="22" height="22"><path d="M1 21l7-8" stroke="#222" stroke-width="2"/><path d="M4 10l8 8 2-5 4-3 2-1-7-8-1 2-3 4z" fill="#e8e8e8" stroke="#222"/></svg>
<svg style="left:1689px;top:238px" width="20" height="20"><use href="#scene"/></svg>
<div class="t" style="left:1715px;top:241px">Scene</div>
<div class="sep" style="left:1655px;top:269px;width:220px"></div>
<i class="ad" style="left:1665px;top:279px"></i>
<div class="t h" style="left:1680px;top:276px">Render</div>
<i class="dots" style="left:1855px;top:281px"></i>
<div class="b rL" style="left:1660px;top:310px;width:71px;height:24px"></div>
<div class="b" style="left:1730px;top:310px;width:71px;height:24px"></div>
<div class="b rR" style="left:1800px;top:310px;width:70px;height:24px"></div>
<svg style="left:1663px;top:312px" width="20" height="20"><use href="#cam"/><path d="M16 1v6M13 4h6" stroke="#f0d040" stroke-width="2.200"/></svg>
<div class="t" style="left:1683px;top:314px">Render</div>
<svg style="left:1733px;top:311px" width="20" height="20"><use href="#clap"/></svg>
<div class="t" style="left:1753px;top:314px;width:46px;overflow:hidden">Animat</div>
<svg style="left:1803px;top:313px" width="20" height="18"><path d="M2 6h4l5-4v14l-5-4H2z" fill="#d8d8d8" stroke="#222"/><path d="M13 5c2 2 2 6 0 8M15 3c3 3 3 9 0 12" fill="none" stroke="#6c9ad8" stroke-width="1.400"/></svg>
<div class="t" style="left:1826px;top:314px">Audio</div>

<div class="t" style="left:1669px;top:346px">Display:</div>
<div class="m rL" style="left:1736px;top:341px;width:110px;height:24px"></div>
<div class="t w" style="left:1746px;top:346px">Image Editor</div>
<i class="ud" style="left:1833px;top:344px"></i>
<div class="b rR" style="left:1845px;top:341px;width:25px;height:24px"></div>
<svg style="left:1848px;top:342px" width="20" height="21"><path d="M4 9V6a3.500 3.500 0 0 1 7 0" fill="none" stroke="#eee" stroke-width="1.800"/><rect x="5" y="10" width="13" height="9" fill="#ddd" stroke="#222"/><rect x="9" y="13" width="5" height="2" fill="#333"/></svg>
<div class="sep" style="left:1655px;top:375px;width:220px"></div>
<i class="ad" style="left:1665px;top:384px"></i>
<div class="t h" style="left:1681px;top:382px">Dimensions</div>
<i class="dots" style="left:1855px;top:386px"></i>
<div class="m rL" style="left:1660px;top:414px;width:161px;height:25px"></div>
<div class="t w" style="left:1669px;top:419px">Render Presets</div>
<i class="ud" style="left:1808px;top:417px"></i>
<div class="b" style="left:1820px;top:414px;width:25px;height:25px"></div>
<svg style="left:1824px;top:418px" width="16" height="16"><use href="#plus"/></svg>
<div class="b rR" style="left:1844px;top:414px;width:26px;height:25px"></div>
<svg style="left:1849px;top:418px" width="16" height="16"><path d="M2 8h12" stroke="#222" stroke-width="4"/><path d="M2.500 8h11" stroke="#eee" stroke-width="2"/></svg>

<div class="t" style="left:1669px;top:451px">Resolution:</div>
<div class="t" style="left:1781px;top:451px">Frame Range:</div>
<div class="n rT" style="left:1660px;top:471px;width:99px;height:25px"><i class="al"></i><i class="arr"></i></div>
<div class="n" style="left:1660px;top:495px;width:99px;height:25px"><i class="al"></i><i class="arr"></i></div>
<div class="n rB" style="left:1660px;top:519px;width:99px;height:25px;background:linear-gradient(90deg,#6c6c6c 55px,#a8a8a8 55px)"></div>
<div class="t" style="left:1680px;top:476px">: 1920 px</div>
<div class="t" style="left:1680px;top:500px">:1080 px</div>
<div class="t" style="left:1712px;top:525px">50%</div>
<div class="n rT" style="left:1771px;top:471px;width:99px;height:25px"><i class="al"></i><i class="arr"></i></div>
<div class="n" style="left:1771px;top:495px;width:99px;height:25px"><i class="al"></i><i class="arr"></i></div>
<div class="n rB" style="left:1771px;top:519px;width:99px;height:25px"><i class="al"></i><i class="arr"></i></div>
<div class="t" style="left:1790px;top:476px">Start F: 1</div>
<div class="t" style="left:1791px;top:500px">End :250</div>
<div class="t" style="left:1791px;top:525px">Frame: 1</div>

<div class="t" style="left:1669px;top:551px">Aspect Ratio:</div>
<div class="t" style="left:1781px;top:551px">Frame Rate:</div>
<div class="n rT" style="left:1660px;top:571px;width:99px;height:25px"><i class="al"></i><i class="arr"></i></div>
<div class="n rB" style="left:1660px;top:595px;width:99px;height:24px"><i class="al"></i><i class="arr"></i></div>
<div class="t" style="left:1679px;top:576px">X:</div><div class="t" style="left:1703px;top:576px">1.000</div>
<div class="t" style="left:1680px;top:600px">Y:</div><div class="t" style="left:1702px;top:600px">1.000</div>
<div class="m r" style="left:1771px;top:571px;width:99px;height:25px"></div>
<div class="t w" style="left:1781px;top:576px">24 fps</div>
<i class="ud" style="left:1858px;top:575px"></i>
<div class="t" style="left:1780px;top:601px">Time Rema...</div>
<div class="n pL" style="left:1771px;top:621px;width:50px;height:24px"><i class="al"></i><i class="arr"></i></div>
<div class="n pR" style="left:1819px;top:621px;width:51px;height:24px"><i class="al"></i><i class="arr"></i></div>
<div class="t" style="left:1791px;top:625px">1</div>
<div class="t" style="left:1841px;top:625px">1</div>
<i class="cb" style="left:1664px;top:627px"></i>
<div class="t" style="left:1692px;top:628px">B</div>
<i class="cb" style="left:1719px;top:627px;opacity:.55"></i>
<div class="t" style="left:1746px;top:628px;opacity:.5">C</div>

<div class="sep" style="left:1655px;top:657px;width:220px"></div>
<i class="ad" style="left:1665px;top:666px"></i>
<i class="cb" style="left:1681px;top:664px"></i>
<svg style="left:1683px;top:661px" width="17" height="17"><path d="M3 9l3 5 7-12" fill="none" stroke="#eee" stroke-width="2"/></svg>
<div class="t h" style="left:1705px;top:664px">Anti-Aliasing</div>
<i class="dots" style="left:1855px;top:668px"></i>
<div class="m rL" style="left:1660px;top:696px;width:25px;height:25px"></div>
<div style="left:1684px;top:696px;width:26px;height:25px;background:linear-gradient(#4f78b8,#5f8bd0);border:1px solid #2c2c2c;box-sizing:border-box"></div>
<div class="m" style="left:1709px;top:696px;width:26px;height:25px"></div>
<div class="m rR" style="left:1734px;top:696px;width:26px;height:25px"></div>
<div class="t w" style="left:1668px;top:702px">5</div>
<div class="t w" style="left:1693px;top:702px">8</div>
<div class="t w" style="left:1714px;top:702px">11</div>
<div class="t w" style="left:1739px;top:702px">16</div>
<div class="m r" style="left:1770px;top:696px;width:100px;height:25px"></div>
<div class="t w" style="left:1780px;top:702px">Mitchell-N</div>
<i class="ud" style="left:1858px;top:700px"></i>
<i class="cb" style="left:1664px;top:727px"></i>
<div class="t" style="left:1691px;top:729px">Full Sampl</div>
<div class="n pill" style="left:1770px;top:724px;width:100px;height:24px"><i class="al"></i><i class="arr"></i></div>
<div class="t" style="left:1795px;top:729px">1.000 px</div>

<div class="sep" style="left:1655px;top:758px;width:220px"></div>
<i class="ac" style="left:1665px;top:767px"></i>
<i class="cb" style="left:1681px;top:765px"></i>
<div class="t h" style="left:1705px;top:765px;width:150px;overflow:hidden">Sampled Motion Blur</div>
<i class="dots" style="left:1855px;top:769px"></i>
<div class="sep" style="left:1655px;top:787px;width:220px"></div>
<i class="ac" style="left:1665px;top:796px"></i>
<div class="t h" style="left:1680px;top:794px">Shading</div>
<i class="dots" style="left:1855px;top:798px"></i>
<div class="sep" style="left:1655px;top:816px;width:220px"></div>
<i class="ac" style="left:1665px;top:825px"></i>
<div class="t h" style="left:1680px;top:823px">Performance</div>
<i class="dots" style="left:1855px;top:827px"></i>
<div class="sep" style="left:1655px;top:845px;width:220px"></div>
<i class="ac" style="left:1665px;top:854px"></i>
<div class="t h" style="left:1680px;top:852px">Post Processing</div>
<i class="dots" style="left:1855px;top:856px"></i>
<div class="sep" style="left:1655px;top:874px;width:220px"></div>
<i class="ac" style="left:1665px;top:883px"></i>
<div class="t h" style="left:1680px;top:881px">Metadata</div>
<i class="dots" style="left:1855px;top:885px"></i>
<div class="sep" style="left:1655px;top:903px;width:220px"></div>
<i class="ad" style="left:1665px;top:912px"></i>
<div class="t h" style="left:1680px;top:910px">Output</div>
<i class="dots" style="left:1855px;top:914px"></i>
<div class="f rL" style="left:1660px;top:942px;width:185px;height:25px"></div>
<div class="t" style="left:1669px;top:948px">/tmp\</div>
<div class="b rR" style="left:1844px;top:942px;width:26px;height:25px"></div>
<svg style="left:1847px;top:944px" width="20" height="21"><path d="M2 6h6l2 2h8v11H2z" fill="#d8c890" stroke="#222"/><rect x="6" y="1" width="9" height="6" fill="#eee" stroke="#222"/></svg>
<i class="cb" style="left:1664px;top:977px"></i>
<svg style="left:1666px;top:973px" width="17" height="10"><path d="M3 6l3 5 7-10" fill="none" stroke="#eee" stroke-width="2"/></svg>
<div class="t" style="left:1692px;top:980px">Overwrite</div>
<i class="cb" style="left:1774px;top:977px"></i>
<svg style="left:1776px;top:973px" width="17" height="10"><path d="M3 6l3 5 7-10" fill="none" stroke="#eee" stroke-width="2"/></svg>
<div class="t" style="left:1802px;top:980px">File Exte</div>
<svg style="left:1651px;top:968px" width="15" height="15"><use href="#hatch2"/></svg>
</body></html>
